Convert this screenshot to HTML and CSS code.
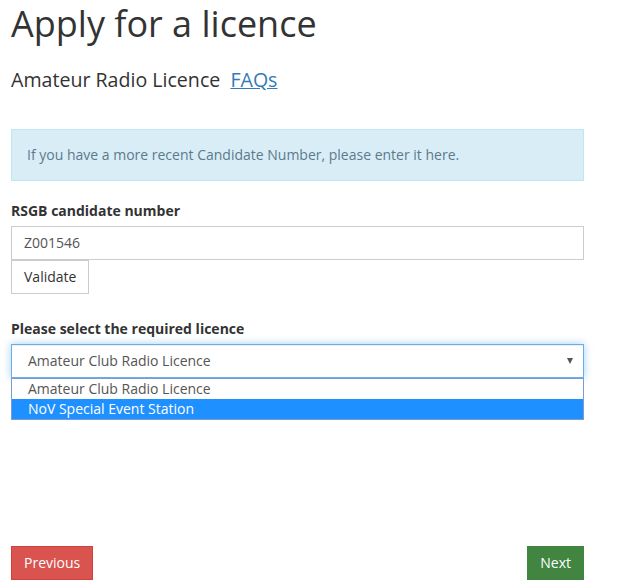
FILE: index.html
```html
<!DOCTYPE html>
<html lang="en">
<head>
<meta charset="utf-8">
<title>Apply for a licence</title>
<link rel="stylesheet" href="styles.css">
</head>
<body>
<div class="page">
  <h1 class="title">Apply for a licence</h1>
  <h3 class="subtitle">Amateur Radio Licence <a href="#" class="faq">FAQs</a></h3>

  <div class="alert">If you have a more recent Candidate Number, please enter it here.</div>

  <div class="group">
    <label class="label">RSGB candidate number</label>
    <div class="input">Z001546</div>
    <button class="btn btn-default">Validate</button>
  </div>

  <div class="group group-select">
    <label class="label">Please select the required licence</label>
    <div class="select-wrap">
      <div class="select">
        <span>Amateur Club Radio Licence</span>
        <span class="caret"></span>
      </div>
      <div class="listbox">
        <div class="option">Amateur Club Radio Licence</div>
        <div class="option selected">NoV Special Event Station</div>
      </div>
    </div>
  </div>

  <div class="footer">
    <button class="btn btn-danger">Previous</button>
    <button class="btn btn-success">Next</button>
  </div>
</div>
</body>
</html>
```

FILE: styles.css
```css
* { box-sizing: border-box; }

body {
  margin: 0;
  font-family: "Open Sans", "Noto Sans", sans-serif;
  font-size: 14px;
  line-height: 20px;
  color: #333;
  background: #fff;
}

.page {
  width: 573px;
  margin-left: 11px;
}

.title {
  margin: 4px 0 0;
  font-size: 36px;
  font-weight: 400;
  line-height: 40px;
}

.subtitle {
  margin: 26px 0 0;
  font-size: 19.6px;
  font-weight: 400;
  line-height: 20px;
}

.faq {
  color: #337ab7;
  text-decoration: underline;
  margin-left: 5px;
}

.alert {
  margin-top: 39px;
  padding: 15px;
  background: #d9edf7;
  border: 1px solid #bce8f1;
  color: #5b7a8c;
}

.group {
  margin-top: 20px;
}

.group-select {
  margin-top: 25px;
}

.label {
  display: block;
  font-weight: 700;
  margin-bottom: 5px;
}

.input {
  height: 34px;
  padding: 6px 12px;
  border: 1px solid #ccc;
  color: #555;
}

.btn {
  display: inline-block;
  height: 34px;
  padding: 6px 12px;
  font-family: inherit;
  font-size: 14px;
  line-height: 20px;
  border: 1px solid transparent;
  cursor: pointer;
}

.btn-default {
  background: #fff;
  border-color: #ccc;
  color: #333;
}

.btn-danger {
  background: #d9534f;
  border-color: #d43f3a;
  color: #fff;
}

.btn-success {
  background: #418541;
  border-color: #418541;
  color: #fff;
}

.select-wrap {
  position: relative;
}

.select {
  height: 34px;
  display: flex;
  align-items: center;
  justify-content: space-between;
  padding: 0 8px 0 16px;
  border: 1px solid #66afe9;
  box-shadow: inset 0 1px 1px rgba(0,0,0,.075), 0 0 8px rgba(102,175,233,.6);
  color: #555;
}

.caret {
  width: 0;
  height: 0;
  border-left: 3.5px solid transparent;
  border-right: 3.5px solid transparent;
  border-top: 6px solid #555;
  margin-right: 2px;
}

.listbox {
  position: absolute;
  top: 100%;
  left: 0;
  right: 0;
  border: 1px solid #7a9cd3;
  background: #fff;
}

.option {
  height: 20px;
  padding-left: 16px;
  line-height: 20px;
  color: #555;
}

.option.selected {
  background: #1e90ff;
  color: #fff;
}

.footer {
  margin-top: 168px;
  display: flex;
  justify-content: space-between;
}
```
